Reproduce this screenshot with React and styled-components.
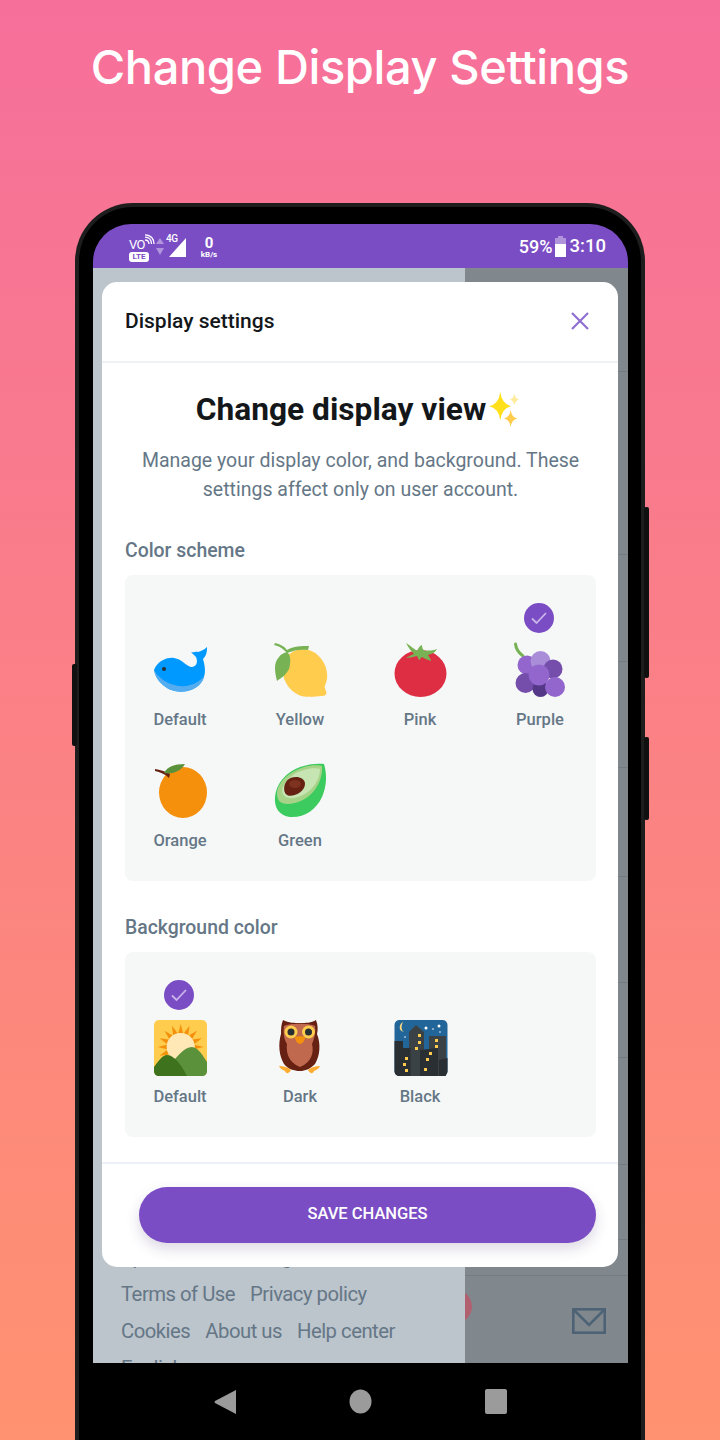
import React from "react";
import styled, { createGlobalStyle } from "styled-components";

const GlobalStyle = createGlobalStyle`
  html, body {
    margin: 0;
    padding: 0;
  }
  body {
    font-family: Roboto, "Liberation Sans", sans-serif;
  }
`;

const PURPLE = "#7b4dc4";
const SLATE = "#657786";

const Page = styled.div`
  width: 720px;
  height: 1440px;
  overflow: hidden;
  background: linear-gradient(180deg, #f66f9b 0%, #ff9270 100%);
`;

const Headline = styled.h1`
  margin: 0;
  height: 134px;
  line-height: 134px;
  text-align: center;
  color: #fff;
  font-family: Inter, sans-serif;
  font-size: 47px;
  font-weight: 500;
  letter-spacing: -0.4px;
`;

const Phone = styled.div`
  position: relative;
  box-sizing: border-box;
  width: 570px;
  height: 1320px;
  margin: 69px auto 0;
  padding: 17px 13px 0 14px;
  background: #000;
  border: 4px solid #1d1d1d;
  border-bottom: 0;
  border-radius: 58px 58px 0 0;
`;

const SideKey = styled.div`
  position: absolute;
  width: 5px;
  top: ${(p) => p.$top}px;
  height: ${(p) => p.$height}px;
  ${(p) => (p.$left ? "left: -7px;" : "right: -8px;")}
  background: #101010;
  border-radius: 2px;
`;

const Screen = styled.div`
  border-radius: 38px 38px 0 0;
  overflow: hidden;
`;

const StatusBar = styled.div`
  display: flex;
  align-items: center;
  justify-content: space-between;
  height: 44px;
  padding: 0 22px 0 36px;
  background: ${PURPLE};
  color: #fff;
`;

const StatusGroup = styled.div`
  display: flex;
  align-items: center;
`;

const VoLte = styled.div`
  display: flex;
  flex-direction: column;
  align-items: flex-start;
  width: 21px;
  margin-top: 4px;
`;

const VoRow = styled.div`
  display: flex;
  align-items: flex-end;
  height: 17px;
  font-size: 13px;
  line-height: 13px;
  letter-spacing: -0.6px;
`;

const LteTag = styled.span`
  display: block;
  width: 20px;
  height: 10px;
  margin-top: 1px;
  border-radius: 3px;
  background: #fff;
  color: ${PURPLE};
  font-size: 8px;
  font-weight: 700;
  line-height: 10px;
  text-align: center;
`;

const SignalBox = styled.div`
  position: relative;
  width: 30px;
  height: 22px;
  margin-left: 6px;
`;

const FourG = styled.span`
  position: absolute;
  left: 10px;
  top: -1px;
  font-size: 10px;
  font-weight: 500;
  line-height: 10px;
  letter-spacing: -0.4px;
`;

const Speed = styled.div`
  display: flex;
  flex-direction: column;
  align-items: center;
  width: 18px;
  margin-left: 14px;
  padding-top: 3px;
  font-weight: 700;
`;

const SpeedValue = styled.span`
  font-size: 15px;
  line-height: 15px;
`;

const SpeedUnit = styled.span`
  font-size: 8px;
  line-height: 8px;
`;

const Percent = styled.span`
  font-size: 18px;
  font-weight: 500;
`;

const BatterySvg = styled.svg`
  flex: none;
  margin-left: 1px;
`;

const Clock = styled.span`
  margin-left: 2px;
  font-size: 18.5px;
  font-weight: 500;
`;

const ScreenBody = styled.div`
  position: relative;
  display: flex;
  height: 1095px;
`;

const Drawer = styled.div`
  display: flex;
  flex-direction: column;
  justify-content: flex-end;
  flex: none;
  box-sizing: border-box;
  width: 372px;
  height: 1095px;
  padding: 0 0 0 28px;
  overflow: hidden;
  background: #bcc4cc;
  color: ${SLATE};
`;

const DrawerLine = styled.div`
  display: flex;
  flex: none;
  gap: 15px;
  height: ${(p) => p.$height || 37}px;
  font-size: 20.3px;
  line-height: 37px;
  letter-spacing: -0.5px;
`;

const Feed = styled.div`
  display: flex;
  flex-direction: column;
  flex: 1;
  overflow: hidden;
  background: #80888e;
`;

const FeedRow = styled.div`
  flex: none;
  height: ${(p) => p.$height}px;
  box-sizing: border-box;
  border-bottom: 1px solid #747c83;
`;

const FeedTabs = styled.div`
  position: relative;
  display: flex;
  justify-content: flex-end;
  flex: 1;
  padding: 32px 22px 0 0;
`;

const RedDot = styled.span`
  position: absolute;
  left: -26px;
  top: 14px;
  width: 33px;
  height: 33px;
  border-radius: 50%;
  background: #b0606f;
`;

const Modal = styled.div`
  position: absolute;
  top: 14px;
  left: 9px;
  width: 516px;
  height: 985px;
  display: flex;
  flex-direction: column;
  border-radius: 15px;
  overflow: hidden;
  background: #fff;
`;

const ModalHeader = styled.div`
  display: flex;
  align-items: center;
  justify-content: space-between;
  flex: none;
  height: 81px;
  padding: 0 28px 2px 23px;
  border-bottom: 2px solid #eef2f5;
  box-sizing: border-box;
`;

const ModalTitle = styled.h2`
  margin: 0;
  color: #14171a;
  font-size: 21px;
  font-weight: 500;
`;

const ModalContent = styled.div`
  flex: 1;
  padding: 0 22px 0 23px;
`;

const ViewHeading = styled.h3`
  display: flex;
  align-items: center;
  justify-content: center;
  height: 36px;
  margin: 28px 0 0;
  padding-right: 4px;
  color: #14171a;
  font-size: 31.7px;
  font-weight: 700;
`;

const Sub = styled.p`
  margin: 19px 0 0;
  color: ${SLATE};
  font-size: 19.5px;
  line-height: 29px;
  text-align: center;
`;

const SectionLabel = styled.div`
  height: 24px;
  margin-top: 34px;
  color: ${SLATE};
  font-size: 19.4px;
  font-weight: 500;
  line-height: 26px;
`;

const Panel = styled.div`
  display: grid;
  grid-template-columns: repeat(4, 120px);
  justify-content: center;
  row-gap: 34px;
  margin-top: 13px;
  padding: 68px 1px 30px 0;
  border-radius: 8px;
  background: #f6f8f8;
`;

const Choice = styled.div`
  position: relative;
  display: flex;
  flex-direction: column;
  align-items: center;
  gap: 13px;
`;

const ChoiceLabel = styled.span`
  height: 20px;
  color: ${SLATE};
  font-size: 16.5px;
  font-weight: 500;
  line-height: 20px;
`;

const CheckBadge = styled.span`
  position: absolute;
  left: 44px;
  top: -40px;
  display: flex;
  align-items: center;
  justify-content: center;
  width: 30px;
  height: 30px;
  border-radius: 50%;
  background: ${PURPLE};
`;

const ModalFooter = styled.div`
  flex: none;
  height: 105px;
  box-sizing: border-box;
  padding: 23px 22px 0 37px;
  border-top: 2px solid #eef0f8;
`;

const SaveButton = styled.button`
  display: block;
  width: 100%;
  height: 56px;
  padding: 0 0 4px;
  border: 0;
  border-radius: 28px;
  background: ${PURPLE};
  box-shadow: 0 6px 14px rgba(60, 40, 100, 0.18);
  color: #fff;
  font-family: inherit;
  font-size: 16.5px;
  font-weight: 500;
`;

const NavBar = styled.div`
  display: flex;
  align-items: flex-start;
  justify-content: center;
  gap: 113px;
  height: 100px;
  padding-top: 26px;
  background: #000;
`;

const EmojiSvg = styled.svg`
  display: block;
  flex: none;
  width: 54px;
  height: 54px;
  overflow: visible;
  transform: translateX(1px);
`;

const Emoji = ({ children }) => <EmojiSvg viewBox="0 0 54 54">{children}</EmojiSvg>;

const Whale = () => (
  <Emoji>
    <path d="M0 27C3 19 12 14 20 15C28 16 33 24 38 24C43 23 44 19 42 14C40 12 38 10 37 9C40 10 42 8 44 9C47 8 50 7 53 4C53 8 53 12 49 16C52 26 52 34 46 41C38 50 20 52 9 42C4 38 1 33 0 27Z" fill="#0099ff" />
    <path d="M0 27C4 34 12 41 25 43C35 44 45 40 50 33C50 36 48 39 46 41C38 50 20 52 9 42C4 38 1 33 0 27Z" fill="#55acee" />
    <circle cx="10" cy="26" r="2" fill="#292f33" />
  </Emoji>
);

const Lemon = () => (
  <Emoji>
    <ellipse cx="31" cy="30" rx="21.5" ry="24.5" transform="rotate(-28 31 30)" fill="#ffcc4d" />
    <path d="M40 50L50 42L52.5 50Q52 53 48 53L36 54Z" fill="#ffcc4d" />
    <path d="M13 9C17 12 17 19 15 26C12 32 7 35 3 38C1 30 -1 20 5 14C7 11 10 10 13 9Z" fill="#77b255" />
    <path d="M1 0C6 1 10 3 13 7C19 3 28 3 35 3L34 7C27 6 20 7 13 10L11 8C8 5 5 3 0 2Z" fill="#77b255" />
  </Emoji>
);

const Tomato = () => (
  <Emoji>
    <ellipse cx="26.5" cy="30.5" rx="26" ry="23.5" fill="#dd2e44" />
    <path d="M12 0C17 3 20 6 23 8C24 6 25 3 28 2C28 5 29 7 31 8C35 7 39 8 43 6C41 10 37 11 34 12C35 14 37 16 37 18C33 17 30 15 28 14C26 15 26 17 25 17C24 16 24 14 23 13C19 14 15 15 12 15C15 13 17 12 20 11C17 8 14 4 12 0Z" fill="#77b255" />
  </Emoji>
);

const Grapes = () => (
  <Emoji>
    <path d="M1.5 1C2 6 5 10 9 13" fill="none" stroke="#77b255" strokeWidth="3" strokeLinecap="round" />
    <circle cx="13" cy="22" r="9.5" fill="#9266cc" />
    <circle cx="26.5" cy="18" r="10" fill="#aa8dd8" />
    <circle cx="39" cy="26" r="9.5" fill="#744eaa" />
    <circle cx="11.5" cy="40" r="10" fill="#744eaa" />
    <circle cx="26.5" cy="46" r="8" fill="#553788" />
    <circle cx="41" cy="44" r="10" fill="#9266cc" />
    <circle cx="25" cy="32" r="10.5" fill="#9266cc" />
  </Emoji>
);

const Orange = () => (
  <Emoji>
    <ellipse cx="29" cy="28.5" rx="24" ry="25.5" fill="#f4900c" />
    <path d="M1 5C6 6 11 7 16 10L15 14C11 10 6 8 1 7Z" fill="#662113" />
    <path d="M10 9C13 3 20 0 31 0C28 6 19 11 10 9Z" fill="#5c913b" />
  </Emoji>
);

const Avocado = () => (
  <Emoji>
    <path d="M50 0C53 10 53 22 48 33C42 46 30 54 16 53C5 52 0 43 1 33C2 20 12 8 26 3C34 0 44 -1 50 0Z" fill="#3ccb5e" />
    <path d="M48 2C49 12 44 24 36 31C28 38 16 42 8 39C3 37 2 30 4 24C8 14 18 7 30 3C37 1 44 1 48 2Z" fill="#a6d388" />
    <path d="M46 5C46 13 42 21 35 27C28 33 17 36 12 33C8 31 7 26 10 21C14 13 22 8 30 6C36 4 42 4 46 5Z" fill="#c6e5b3" />
    <path d="M31 20C31 27 21 33 14 31.5C9 30 9 21 13 16.5C18 11 31 12 31 20Z" fill="#662113" />
    <ellipse cx="21" cy="20" rx="6" ry="4" fill="#7d3320" />
  </Emoji>
);

const sunRays = Array.from({ length: 16 }, (_, i) => {
  const a = (i * Math.PI * 2) / 16;
  const tip = [26.7 + Math.cos(a) * 23, 27 + Math.sin(a) * 23];
  const l = [26.7 + Math.cos(a - 0.17) * 14, 27 + Math.sin(a - 0.17) * 14];
  const r = [26.7 + Math.cos(a + 0.17) * 14, 27 + Math.sin(a + 0.17) * 14];
  return [tip, l, r].map((pt) => pt.join(",")).join(" ");
});

const Sunrise = () => (
  <Emoji>
    <rect x="0" width="53" height="56" rx="5" fill="#ffcc4d" />
    {sunRays.map((pts) => (
      <polygon key={pts} points={pts} fill="#f4900c" />
    ))}
    <circle cx="26.7" cy="27" r="14" fill="#ffe8b6" />
    <path d="M17 44C22 38 30 27 38 27C44 27 49 36 53 42V51C53 54 51 56 48 56H20Z" fill="#5c913b" />
    <path d="M0 47C4 42 8 35 13 35C21 35 29 48 33 56H5C2 56 0 54 0 51Z" fill="#3e721d" />
  </Emoji>
);

const Owl = () => (
  <Emoji>
    <path d="M9 0C15 3 20 3 26 3C32 3 37 3 42 0C44 5 44 10 43 14C47 24 46 36 41 44C36 49 31 51 26 51C20 51 14 49 10 44C5 36 4 24 7 14C7 9 7 5 9 0Z" fill="#662113" />
    <path d="M10 6C15 3 36 3 41 6C42 12 40 20 38 24C40 32 38 42 26 47C14 42 12 32 13 24C10 20 9 12 10 6Z" fill="#c1694f" />
    <circle cx="17" cy="12" r="6.5" fill="#ffcc4d" />
    <circle cx="34.5" cy="12" r="6.5" fill="#ffcc4d" />
    <circle cx="17" cy="12" r="3.5" fill="#292f33" />
    <circle cx="34.5" cy="12" r="3.5" fill="#292f33" />
    <path d="M21 17C23 16 29 16 31 17C31 21 28 24 26 24C24 24 21 21 21 17Z" fill="#f4900c" />
    <path d="M5 46C10 46 13 47 17 50C15 54 12 54 11 51C9 50 6 49 5 46ZM46 46C41 46 38 47 34 50C36 54 39 54 40 51C42 50 45 49 46 46Z" fill="#ffac33" />
  </Emoji>
);

const cityWindows = [
  [24, 14], [24, 21], [21, 27], [41, 19], [41, 25], [35, 32], [32, 38], [11, 37], [9, 43], [11, 49], [30, 48],
];

const City = () => (
  <Emoji>
    <rect x="0.5" width="53" height="56" rx="5" fill="#226699" />
    <path d="M9 2C5 4 4 11 10 12C7 10 7 6 9 2Z" fill="#ffd983" />
    <circle cx="32" cy="8" r="1.5" fill="#fff" />
    <circle cx="45" cy="6" r="1.5" fill="#fff" />
    <circle cx="39" cy="9" r="0.8" fill="#fff" />
    <circle cx="46" cy="12" r="0.8" fill="#fff" />
    <circle cx="11" cy="17" r="0.8" fill="#fff" />
    <path d="M15 56V12L22 5L30 12V56Z" fill="#3b4246" />
    <path d="M35 56V16H52V56Z" fill="#3b4246" />
    <path d="M0.5 21H9V28H16.5V56H5.5C2.5 56 0.5 54 0.5 51Z" fill="#292f33" />
    <path d="M26 30L44 28V56H26Z" fill="#292f33" />
    <path d="M45 40L53.5 38V51C53.5 54 51.5 56 48.5 56H45Z" fill="#292f33" />
    {cityWindows.map(([x, y]) => (
      <rect key={`${x}-${y}`} x={x} y={y} width="3" height="3" fill="#ffcc4d" />
    ))}
  </Emoji>
);

const SparkleSvg = styled.svg`
  flex: none;
  width: 32px;
  height: 36px;
  margin-left: 3px;
`;

const star = (cx, cy, r, k = 0.12) =>
  `M${cx} ${cy - r}Q${cx + r * k} ${cy - r * k} ${cx + r * 0.8} ${cy}Q${cx + r * k} ${cy + r * k} ${cx} ${cy + r}Q${cx - r * k} ${cy + r * k} ${cx - r * 0.8} ${cy}Q${cx - r * k} ${cy - r * k} ${cx} ${cy - r}Z`;

const Sparkles = () => (
  <SparkleSvg viewBox="0 0 34 38">
    <path d={star(12, 16, 15)} fill="#ffe01a" />
    <path d={star(27, 9, 6.5)} fill="#ffeb99" />
    <path d={star(23, 29, 9)} fill="#ffcc4d" />
  </SparkleSvg>
);

const colorSchemes = [
  { label: "Default", art: <Whale /> },
  { label: "Yellow", art: <Lemon /> },
  { label: "Pink", art: <Tomato /> },
  { label: "Purple", art: <Grapes />, picked: true },
  { label: "Orange", art: <Orange /> },
  { label: "Green", art: <Avocado /> },
];

const backgrounds = [
  { label: "Default", art: <Sunrise />, picked: true },
  { label: "Dark", art: <Owl /> },
  { label: "Black", art: <City /> },
];

const ChoiceGrid = ({ items }) => (
  <Panel>
    {items.map((item) => (
      <Choice key={item.label}>
        {item.picked && (
          <CheckBadge>
            <svg width="18" height="14" viewBox="0 0 18 14" fill="none">
              <path d="M2 7.5L6.5 12L16 2" stroke="#c9b5ea" strokeWidth="1.8" />
            </svg>
          </CheckBadge>
        )}
        {item.art}
        <ChoiceLabel>{item.label}</ChoiceLabel>
      </Choice>
    ))}
  </Panel>
);

const feedRows = [104, 183, 107, 106, 109, 106, 75, 107, 75, 36];

export default function App() {
  return (
    <Page>
      <GlobalStyle />
      <Headline>Change Display Settings</Headline>
      <Phone>
        <SideKey $top={300} $height={171} />
        <SideKey $top={530} $height={83} />
        <SideKey $left $top={457} $height={82} />
        <Screen>
          <StatusBar>
            <StatusGroup>
              <VoLte>
                <VoRow>
                  VO
                  <svg width="10" height="17" viewBox="0 0 10 17" fill="none" stroke="#fff" strokeWidth="1.3">
                    <path d="M0 6C3 6 4 8 4 10M0 3.2C4.5 3.2 6.5 6 6.5 10M0 0.8C6 0.8 9 5 9 10" />
                  </svg>
                </VoRow>
                <LteTag>LTE</LteTag>
              </VoLte>
              <SignalBox>
                <svg width="30" height="22" viewBox="0 0 30 22">
                  <path d="M4 3L8 9H0ZM4 20L0 13H8Z" fill="#fff" fillOpacity="0.4" />
                  <path d="M30 3V22H13Z" fill="#fff" />
                </svg>
                <FourG>4G</FourG>
              </SignalBox>
              <Speed>
                <SpeedValue>0</SpeedValue>
                <SpeedUnit>kB/s</SpeedUnit>
              </Speed>
            </StatusGroup>
            <StatusGroup>
              <Percent>59%</Percent>
              <BatterySvg width="14" height="21" viewBox="0 0 14 21">
                <path d="M4 0H9V2H12V21H1V2H4Z" fill="#fff" fillOpacity="0.4" />
                <path d="M1 8H12V21H1Z" fill="#fff" />
              </BatterySvg>
              <Clock>3:10</Clock>
            </StatusGroup>
          </StatusBar>
          <ScreenBody>
            <Drawer>
              <DrawerLine>Sponsored and blog</DrawerLine>
              <DrawerLine>
                <span>Terms of Use</span>
                <span>Privacy policy</span>
              </DrawerLine>
              <DrawerLine>
                <span>Cookies</span>
                <span>About us</span>
                <span>Help center</span>
              </DrawerLine>
              <DrawerLine $height={13}>English</DrawerLine>
            </Drawer>
            <Feed>
              {feedRows.map((h, i) => (
                <FeedRow key={i} $height={h} />
              ))}
              <FeedTabs>
                <RedDot />
                <svg width="34" height="26" viewBox="0 0 34 26" fill="none" stroke="#4d6375" strokeWidth="2.6">
                  <rect x="1.3" y="1.3" width="31.4" height="23.4" />
                  <path d="M2 2L17 17L32 2" />
                </svg>
              </FeedTabs>
            </Feed>
            <Modal>
              <ModalHeader>
                <ModalTitle>Display settings</ModalTitle>
                <svg width="20" height="20" viewBox="0 0 20 20" stroke="#8f6fd2" strokeWidth="2.2">
                  <path d="M2 2L18 18M18 2L2 18" />
                </svg>
              </ModalHeader>
              <ModalContent>
                <ViewHeading>
                  Change display view
                  <Sparkles />
                </ViewHeading>
                <Sub>
                  Manage your display color, and background. These
                  <br />
                  settings affect only on user account.
                </Sub>
                <SectionLabel>Color scheme</SectionLabel>
                <ChoiceGrid items={colorSchemes} />
                <SectionLabel>Background color</SectionLabel>
                <ChoiceGrid items={backgrounds} />
              </ModalContent>
              <ModalFooter>
                <SaveButton>SAVE CHANGES</SaveButton>
              </ModalFooter>
            </Modal>
          </ScreenBody>
        </Screen>
        <NavBar>
          <svg width="22" height="26" viewBox="0 0 22 26">
            <path d="M22 1V25L1 14Q0 13 1 12Z" fill="#9b9b9b" />
          </svg>
          <svg width="23" height="25" viewBox="0 0 23 25">
            <ellipse cx="11.5" cy="12.5" rx="11" ry="12" fill="#9b9b9b" />
          </svg>
          <svg width="22" height="25" viewBox="0 0 22 25">
            <rect width="22" height="25" rx="2" fill="#9b9b9b" />
          </svg>
        </NavBar>
      </Phone>
    </Page>
  );
}
